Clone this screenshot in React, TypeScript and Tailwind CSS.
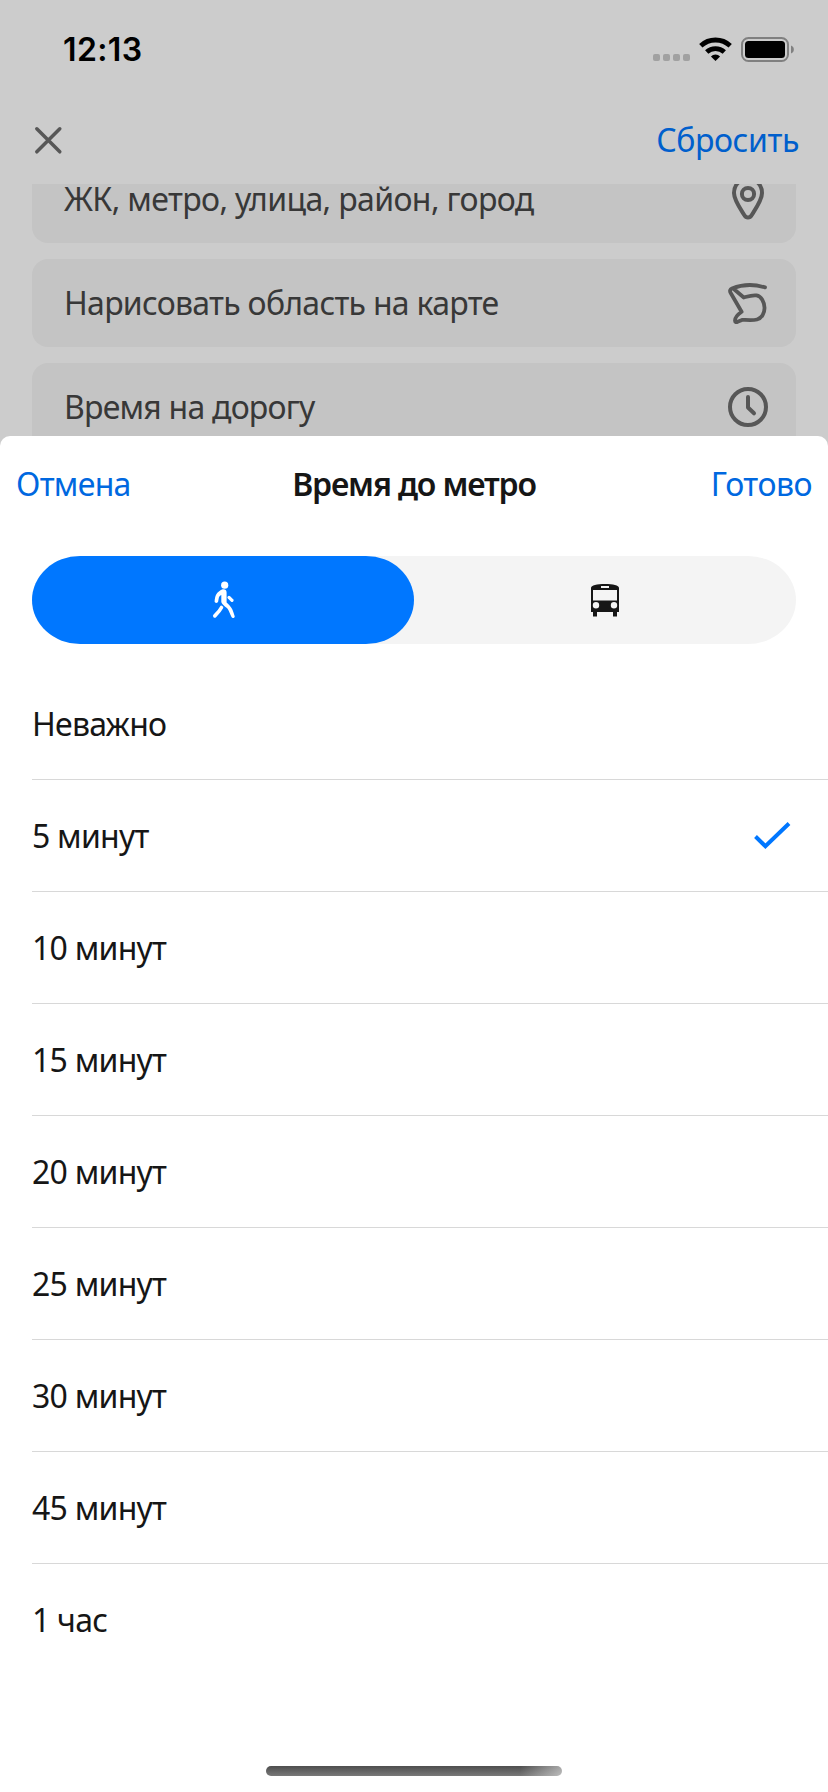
import React from "react";

const FONT = "font-['Noto_Sans','Open_Sans',sans-serif]";

function PinIcon() {
  return (
    <svg width="48" height="48" viewBox="0 0 48 48" fill="none" stroke="#575757" strokeWidth="4" strokeLinejoin="round">
      <path d="M24 4C15 4 10 10.500 10 18c0 7 5.500 14.500 10.600 22.500 1.400 2.600 5.400 2.600 6.800 0C32.500 32.500 38 25 38 18 38 10.500 33 4 24 4Z" />
      <circle cx="24" cy="19" r="6.100" />
    </svg>
  );
}

function DrawIcon() {
  return (
    <svg width="48" height="48" viewBox="0 0 48 48" fill="none" stroke="#575757" strokeWidth="3.800" strokeLinecap="round" strokeLinejoin="round">
      <path d="M41 8.400C30 5 18 5.500 8 9.500 6 10.500 5.500 12 6.700 14L17.600 32.800C14.500 35 11 37.500 11 41.500c0 1.500 1 2.200 2.600 1.300L18.600 40.800c5 .200 10.400.700 14.400-.300 4.500-1.200 7.800-6 7.500-12-.300-5.500-3-11.300-8-12.100-4.300-.600-8.500.900-12.700 2.100L9.500 9.800" />
    </svg>
  );
}

function ClockIcon() {
  return (
    <svg width="48" height="48" viewBox="0 0 48 48" fill="none" stroke="#575757" strokeWidth="4" strokeLinecap="round" strokeLinejoin="round">
      <circle cx="24" cy="24" r="18" />
      <path d="M24 14v10.500l6 5.800" />
    </svg>
  );
}

function WalkIcon() {
  return (
    <svg width="48" height="48" viewBox="-1 0 48 48" fill="#fff" stroke="#fff" strokeLinecap="round" strokeLinejoin="round">
      <circle cx="24.700" cy="9.200" r="3.600" stroke="none" />
      <path
        d="M22 13.600c2.500-.8 4.600.4 4.600 3V26.500c1.800 1.800 3.600 3.400 4.900 5.400 1.400 2.300 2.400 5.500 3.200 8.300.4 1.700-2.400 2.600-3.200.9-1.400-2.700-2.200-5.600-3.600-7.900-1.500-2-6.400-4.600-6.600-7.400V19c-1.400.8-2.200 1.700-2.500 2.900l-.7 3.900c-.5 1.700-3.500 1.400-3.500-.3.200-2.600.5-5 1.600-7 1.300-2.300 3.900-4.100 5.800-4.900Z"
        stroke="none"
      />
      <path d="M21.500 31.500c-1.600 3.200-4 5.800-6.700 8.400" fill="none" strokeWidth="3.600" />
      <path d="M29 21.400l3 3" fill="none" strokeWidth="3.200" />
    </svg>
  );
}

function BusIcon() {
  return (
    <svg width="48" height="48" viewBox="0 0 48 48">
      <path fill="#161616" fillRule="evenodd" d="M10 12c0-2.600 6-4 14-4s14 1.400 14 4V36h-2v4.500h-4V36H16v4.500h-4V36h-2ZM20 10v2h8v-2ZM12 14v10.500h24V14ZM15 26a3 3 0 1 0 0 6.400 3 3 0 0 0 0-6.400ZM33 26a3 3 0 1 0 0 6.400 3 3 0 0 0 0-6.400Z" />
    </svg>
  );
}

function StatusIcons() {
  return (
    <svg width="144" height="30" viewBox="0 0 144 30">
      <g fill="#a1a1a1">
        <rect x="1" y="19" width="7" height="7" rx="2" />
        <rect x="11" y="19" width="7" height="7" rx="2" />
        <rect x="21" y="19" width="7" height="7" rx="2" />
        <rect x="31" y="19" width="7" height="7" rx="2" />
      </g>
      <g fill="none" stroke="#000" strokeWidth="4.800">
        <path d="M48.800 10.800a21.500 21.500 0 0 1 29.400 0" />
        <path d="M54.700 17.100a13 13 0 0 1 17.600 0" />
      </g>
      <path d="M63.500 26l-4.600-4.600a6.500 6.500 0 0 1 9.200 0Z" />
      <rect x="90" y="3" width="46" height="23" rx="6.500" fill="none" stroke="#808080" strokeWidth="2" />
      <rect x="93" y="6" width="40" height="17" rx="3.500" />
      <path d="M139 10.500c3.800 1.300 3.800 6.700 0 8Z" fill="#808080" />
    </svg>
  );
}

const fields = [
  { label: "ЖК, метро, улица, район, город", icon: <PinIcon />, tracking: "tracking-[-0.630px]" },
  { label: "Нарисовать область на карте", icon: <DrawIcon />, tracking: "tracking-[-0.720px]" },
  { label: "Время на дорогу", icon: <ClockIcon />, tracking: "tracking-[-0.780px]" },
];

const options = [
  { label: "Неважно" },
  { label: "5 минут", selected: true },
  { label: "10 минут" },
  { label: "15 минут" },
  { label: "20 минут" },
  { label: "25 минут" },
  { label: "30 минут" },
  { label: "45 минут" },
  { label: "1 час" },
];

export default function App() {
  return (
    <div className={`flex h-[1792px] w-[828px] flex-col overflow-hidden bg-[#cccccc] text-[32px] leading-[44px] ${FONT}`}>
      <header className="flex h-[184px] shrink-0 flex-col">
        <div className="flex h-[100px] items-center justify-between pr-[32px] pl-[63px]">
          <span className="font-['Inter',sans-serif] text-[32px] font-semibold tracking-[0.4px] text-black">12:13</span>
          <StatusIcons />
        </div>
        <div className="flex h-[80px] items-center justify-between pr-[29px] pl-[32px]">
          <svg width="32" height="32" viewBox="0 0 32 32" stroke="#575757" strokeWidth="3.500" strokeLinecap="round">
            <path d="M4.800 4.800l23 23M27.800 4.800l-23 23" />
          </svg>
          <span className="tracking-[-0.4px] text-[#005fcc]">Сбросить</span>
        </div>
      </header>

      <main className="flex h-[252px] shrink-0 flex-col justify-start overflow-hidden px-8">
        <div className="-mt-[29px] flex flex-col gap-4">
          {fields.map((f) => (
            <div key={f.label} className="flex h-[88px] shrink-0 items-center justify-between rounded-2xl bg-[#c4c4c4] pr-[24px] pl-8 text-[#383838]">
              <span className={f.tracking}>{f.label}</span>
              {f.icon}
            </div>
          ))}
        </div>
      </main>

      <section className="flex grow flex-col rounded-t-[10px] bg-white">
        <div className="grid h-[96px] grid-cols-[1fr_auto_1fr] items-center px-4 text-[#0068e0]">
          <span className="tracking-[-0.7px]">Отмена</span>
          <h1 className="font-semibold tracking-[-1.150px] text-[#161616]">Время до метро</h1>
          <span className="text-right tracking-[-0.5px]">Готово</span>
        </div>
        <div className="mx-8 mt-[24px] flex h-[88px] shrink-0 rounded-[48px/44px] bg-[#f4f4f4]">
          <div className="flex w-1/2 items-center justify-center rounded-[48px/44px] bg-[#0077ff]">
            <WalkIcon />
          </div>
          <div className="flex w-1/2 items-center justify-center">
            <BusIcon />
          </div>
        </div>
        <ul className="mt-[24px] flex flex-col pl-8 tracking-[-0.750px] text-[#161616]">
          {options.map((o) => (
            <li key={o.label} className="flex h-[112px] items-center justify-between border-b border-[#d8d8d8] pr-[32px] last:border-b-0">
              <span>{o.label}</span>
              {o.selected && (
                <svg width="48" height="48" viewBox="0 0 48 48" fill="none" stroke="#0077ff" strokeWidth="4">
                  <path d="M7.500 24.500l9.900 9.700L41 11.500" />
                </svg>
              )}
            </li>
          ))}
        </ul>
        <div className="mx-auto mt-[90px] h-[10px] w-[296px] rounded-full bg-[linear-gradient(to_right,transparent_86%,rgba(255,255,255,0.5)),linear-gradient(to_bottom,#4e4e4e,#787878)]" />
      </section>
    </div>
  );
}
